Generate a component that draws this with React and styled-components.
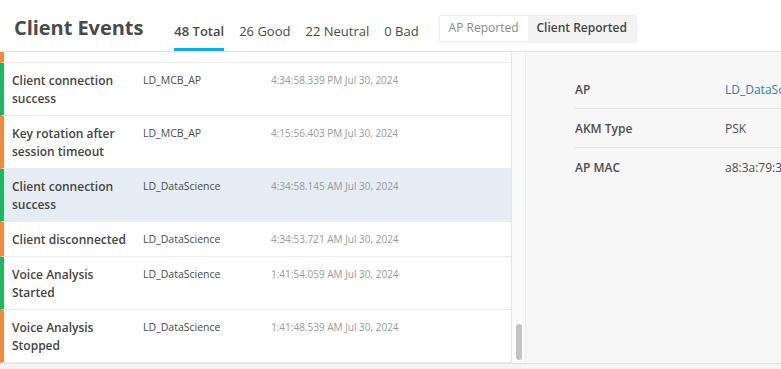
import React from 'react';
import styled, { createGlobalStyle } from 'styled-components';

const GlobalStyle = createGlobalStyle`
  html, body {
    margin: 0;
    padding: 0;
    background: #f4f4f4;
    font-family: "Open Sans", "Noto Sans", sans-serif;
    overflow: hidden;
  }
  * { box-sizing: border-box; }
`;

const Page = styled.div`
  width: 781px;
  height: 369px;
  overflow: hidden;
  display: flex;
  flex-direction: column;
`;

const Header = styled.header`
  height: 52px;
  padding: 5px 0 0 14px;
  display: flex;
  align-items: center;
  background: #fff;
  border-bottom: 1px solid #e4e4e4;
  flex-shrink: 0;
`;

const Title = styled.h1`
  margin: 0 31px 0 0;
  font-size: 20px;
  line-height: 26px;
  font-weight: 700;
  color: #4a4a4a;
  letter-spacing: -0.05px;
`;

const Tabs = styled.nav`
  display: flex;
  align-self: stretch;
  gap: 15px;
`;

const Tab = styled.div`
  display: flex;
  align-items: center;
  padding-top: 8px;
  font-size: 13px;
  line-height: 18px;
  color: #4a4a4a;
  font-weight: ${p => (p.$active ? 600 : 400)};
  border-bottom: 3px solid ${p => (p.$active ? '#11a9e2' : 'transparent')};
`;

const Toggle = styled.div`
  display: flex;
  margin-left: 20px;
  height: 27px;
  border: 1px solid #efefef;
  border-radius: 2px;
  box-shadow: 0 1px 3px rgba(0, 0, 0, 0.06);
  background: #fff;
`;

const ToggleItem = styled.div`
  display: flex;
  align-items: center;
  padding: 0 9px;
  font-size: 12px;
  line-height: 16px;
  color: ${p => (p.$active ? '#444' : '#8a8a8a')};
  font-weight: ${p => (p.$active ? 600 : 400)};
  background: ${p => (p.$active ? '#f3f3f3' : '#fff')};
`;

const Main = styled.div`
  display: flex;
  height: 312px;
  flex-shrink: 0;
  border-bottom: 1px solid #e2e2e2;
`;

const ListPane = styled.div`
  width: 512px;
  background: #fff;
  border-right: 1px solid #e6e6e6;
  display: flex;
  flex-direction: column;
  justify-content: flex-end;
  overflow: hidden;
`;

const Row = styled.div`
  display: flex;
  flex-shrink: 0;
  border-left: 4px solid ${p => (p.$kind === 'good' ? '#1fb862' : '#ef8a3f')};
  border-bottom: 1px solid #ececec;
  background: ${p => (p.$selected ? '#e5ecf4' : '#fff')};
  padding: 9px 0 7px 8px;
`;

const EventName = styled.div`
  width: 131px;
  padding-right: 10px;
  font-size: 12px;
  line-height: 18px;
  font-weight: 600;
  color: #454545;
`;

const ApName = styled.div`
  width: 128px;
  font-size: 10.5px;
  line-height: 17px;
  color: #4a4a4a;
`;

const Time = styled.div`
  font-size: 10px;
  line-height: 17px;
  color: #9a9a9a;
`;

const ScrollTrack = styled.div`
  position: relative;
  width: 14px;
  background: #fafafa;
  border-right: 1px solid #ececec;
`;

const ScrollThumb = styled.div`
  position: absolute;
  left: 4px;
  right: 3px;
  bottom: 3px;
  height: 36px;
  border-radius: 4px;
  background: #c3c3c3;
`;

const DetailPane = styled.div`
  flex: 1;
  background: #f7f7f7;
  padding: 18px 0 0 49px;
  overflow: hidden;
`;

const DetailRow = styled.div`
  display: flex;
  align-items: center;
  height: 39px;
  width: 400px;
  border-bottom: 1px solid ${p => (p.$last ? 'transparent' : '#e3e3e3')};
  white-space: nowrap;
`;

const Label = styled.div`
  width: 150px;
  font-size: 12px;
  font-weight: 600;
  color: #4e4e4e;
`;

const Value = styled.div`
  font-size: 12px;
  color: ${p => (p.$link ? '#1f80cf' : '#4e4e4e')};
`;

const events = [
  { name: 'Client disconnected', ap: 'LD_MCB_AP', time: '4:35:02.112 PM Jul 30, 2024', kind: 'bad' },
  { name: 'Client connection success', ap: 'LD_MCB_AP', time: '4:34:58.339 PM Jul 30, 2024', kind: 'good' },
  { name: 'Key rotation after session timeout', ap: 'LD_MCB_AP', time: '4:15:56.403 PM Jul 30, 2024', kind: 'bad' },
  { name: 'Client connection success', ap: 'LD_DataScience', time: '4:34:58.145 AM Jul 30, 2024', kind: 'good', selected: true },
  { name: 'Client disconnected', ap: 'LD_DataScience', time: '4:34:53.721 AM Jul 30, 2024', kind: 'bad' },
  { name: 'Voice Analysis Started', ap: 'LD_DataScience', time: '1:41:54.059 AM Jul 30, 2024', kind: 'good' },
  { name: 'Voice Analysis Stopped', ap: 'LD_DataScience', time: '1:41:48.539 AM Jul 30, 2024', kind: 'bad' },
];

const details = [
  { label: 'AP', value: 'LD_DataScience', link: true },
  { label: 'AKM Type', value: 'PSK' },
  { label: 'AP MAC', value: 'a8:3a:79:3c:1f:20' },
];

export default function App() {
  return (
    <Page>
      <GlobalStyle />
      <Header>
        <Title>Client Events</Title>
        <Tabs>
          <Tab $active>48 Total</Tab>
          <Tab>26 Good</Tab>
          <Tab>22 Neutral</Tab>
          <Tab>0 Bad</Tab>
        </Tabs>
        <Toggle>
          <ToggleItem>AP Reported</ToggleItem>
          <ToggleItem $active>Client Reported</ToggleItem>
        </Toggle>
      </Header>
      <Main>
        <ListPane>
          {events.map((e, i) => (
            <Row key={i} $kind={e.kind} $selected={e.selected}>
              <EventName>{e.name}</EventName>
              <ApName>{e.ap}</ApName>
              <Time>{e.time}</Time>
            </Row>
          ))}
        </ListPane>
        <ScrollTrack>
          <ScrollThumb />
        </ScrollTrack>
        <DetailPane>
          {details.map((d, i) => (
            <DetailRow key={d.label} $last={i === details.length - 1}>
              <Label>{d.label}</Label>
              <Value $link={d.link}>{d.value}</Value>
            </DetailRow>
          ))}
        </DetailPane>
      </Main>
    </Page>
  );
}
